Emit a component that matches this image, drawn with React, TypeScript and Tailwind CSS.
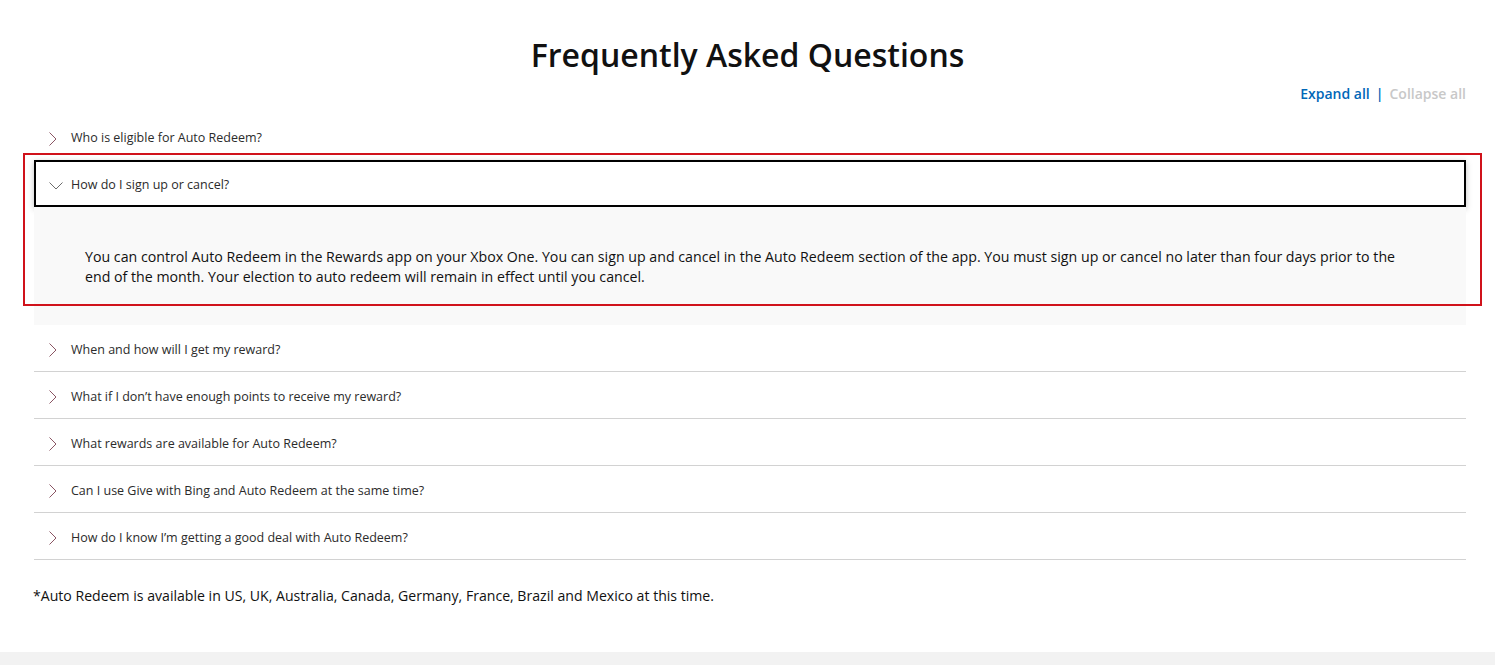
import { useState } from "react";

// region data
const preguntas = [
  "Who is eligible for Auto Redeem?",
  "How do I sign up or cancel?",
  "When and how will I get my reward?",
  "What if I don’t have enough points to receive my reward?",
  "What rewards are available for Auto Redeem?",
  "Can I use Give with Bing and Auto Redeem at the same time?",
  "How do I know I’m getting a good deal with Auto Redeem?",
];

const respuesta =
  "You can control Auto Redeem in the Rewards app on your Xbox One. You can sign up and cancel in the Auto Redeem section of the app. You must sign up or cancel no later than four days prior to the end of the month. Your election to auto redeem will remain in effect until you cancel.";
// endregion

function Chevron({ abierto }: { abierto: boolean }) {
  return abierto ? (
    <svg width="14" height="8" viewBox="0 0 14 8" className="shrink-0">
      <path d="M0.5 0.5 L7 7 L13.5 0.5" fill="none" stroke="#6b6b6b" strokeWidth="1" />
    </svg>
  ) : (
    <svg width="8" height="14" viewBox="0 0 8 14" className="shrink-0">
      <path d="M0.5 0.5 L7 7 L0.5 13.5" fill="none" stroke="#8a5563" strokeWidth="1" />
    </svg>
  );
}

export default function App() {
  const [abierto, setAbierto] = useState<number | null>(1);

  return (
    <div
      className="relative min-h-[665px] bg-white flex flex-col text-black"
      style={{ fontFamily: '"Open Sans", "Noto Sans", sans-serif' }}
    >
      {/* Título */}
      <h1 className="text-center text-[32px] font-semibold leading-none pt-[39px] text-[#111]">
        Frequently Asked Questions
      </h1>

      {/* Expandir / contraer */}
      <div className="flex justify-end items-center mr-[29px] mt-[13px] text-[14px] font-semibold leading-[20px]">
        <button className="text-[#0067b8]" onClick={() => setAbierto(null)}>
          Expand all
        </button>
        <span className="mx-[6px] text-[#0067b8]">|</span>
        <button className="text-[#c8c8c8]" onClick={() => setAbierto(null)}>
          Collapse all
        </button>
      </div>

      {/* Lista */}
      <div className="ml-[34px] mr-[29px] mt-[9px]">
        {preguntas.map((pregunta, index) => {
          const esAbierto = abierto === index;
          const siguienteAbierto = abierto === index + 1;
          const ultimo = index === preguntas.length - 1;
          return (
            <div key={pregunta}>
              <button
                onClick={() => setAbierto(esAbierto ? null : index)}
                className={`
                  w-full
                  h-[47px]
                  pt-[4px]
                  flex
                  items-center
                  text-left
                  text-[12.5px]
                  text-[#2b2b2b]
                  ${esAbierto
                    ? "border-2 border-black shadow-[0_2px_6px_rgba(0,0,0,0.25)] pl-[13px]"
                    : siguienteAbierto && !ultimo
                      ? "pl-[15px]"
                      : "border-b border-[#d2d2d2] pl-[15px]"}
                `}
              >
                <span className="w-[22px] flex items-center">
                  <Chevron abierto={esAbierto} />
                </span>
                <span>{pregunta}</span>
              </button>
              {esAbierto && (
                <div className="bg-[#f9f9f9] pl-[51px] pr-[51px] pt-[40px] pb-[38px] text-[14.2px] leading-[20px] text-[#111]">
                  {respuesta}
                </div>
              )}
            </div>
          );
        })}
      </div>

      {/* Nota */}
      <p className="ml-[33px] mt-[26px] text-[14.1px] leading-[20px] text-[#111]">
        *Auto Redeem is available in US, UK, Australia, Canada, Germany, France, Brazil and Mexico at this time.
      </p>

      <div className="flex-1" />
      <div className="h-[13px] bg-[#f2f2f2]" />

      {/* Marca de resaltado */}
      <div className="absolute left-[23px] top-[153px] w-[1459px] h-[153px] border-2 border-[#d0121b] pointer-events-none" />
    </div>
  );
}
